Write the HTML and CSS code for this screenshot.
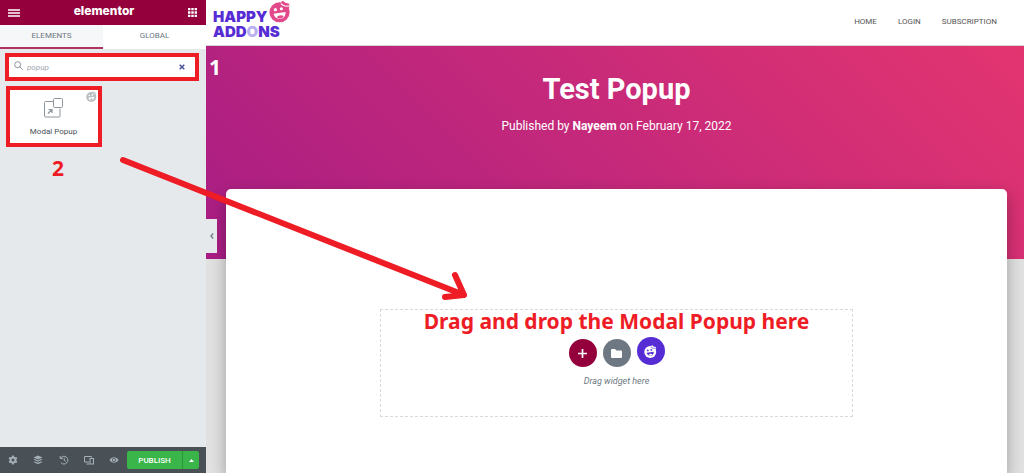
FILE: index.html
```html
<!DOCTYPE html>
<html lang="en">
<head>
    <meta charset="UTF-8">
    <title>Elementor | Test Popup</title>
    <link rel="stylesheet" href="styles.css">
</head>
<body>

<!-- face used by the logo, the widget badge and the add button -->
<svg class="defs" aria-hidden="true">
    <symbol id="happy" viewBox="0 0 24 24">
        <mask id="face">
            <rect width="24" height="24" fill="white"/>
            <path d="M5 14.500l13-2c.3 4.200-2 7-5.500 7.500-3.700.5-6.500-1.500-7.500-5.500z" fill="black"/>
            <circle cx="7" cy="10" r="1.700" fill="black"/>
            <circle cx="13.500" cy="9" r="1.700" fill="black"/>
            <path d="M13 3.500c2 2.500 5.500 3.500 10.500 2M16 0c1.500 2 4 2.800 7 2.300" fill="none" stroke="black" stroke-width="1.200"/>
        </mask>
        <g mask="url(#face)" fill="currentColor">
            <circle cx="11.500" cy="13" r="11"/>
            <path d="M13 1.500c2-1.500 3-1.500 4.500.700 1.500 1 3.500.8 4.500 1.300 1 2 0 5-1.500 6z"/>
        </g>
        <path d="M8.500 18.300c1.500-2.300 5.500-3 7.500-1-1.500 2.700-5.500 3.200-7.500 1z" fill="currentColor"/>
    </symbol>
</svg>

<aside class="panel">
    <header class="panel-header">
        <button class="icon-button" aria-label="Menu">
            <svg width="12" height="8" viewBox="0 0 12 8"><path d="M0 1h12M0 4h12M0 7h12" stroke="currentColor" stroke-width="1.700"/></svg>
        </button>
        <span class="panel-title">elementor</span>
        <button class="icon-button" aria-label="Widgets">
            <svg width="9" height="9" viewBox="0 0 9 9"><path d="M0 1.200h9M0 4.500h9M0 7.800h9" stroke="currentColor" stroke-width="2.300" stroke-dasharray="2.400 .9"/></svg>
        </button>
    </header>

    <nav class="tabs">
        <button class="tab active">ELEMENTS</button>
        <button class="tab">GLOBAL</button>
    </nav>

    <div class="panel-content">
        <div class="search marked">
            <svg width="9" height="12" viewBox="0 0 9 12" fill="none" stroke="#8b949b"><circle cx="3.700" cy="3.700" r="3"/><path d="M6 6l2.700 2.700"/></svg>
            <input type="text" class="search-input" value="popup" aria-label="Search widget">
            <button class="clear" aria-label="Clear">
                <svg width="6" height="6" viewBox="0 0 6 6"><path d="M.7.700l4.600 4.600M5.300.700L.7 5.300" stroke="currentColor" stroke-width="1.500"/></svg>
            </button>
        </div>
        <button class="widget marked">
            <svg class="badge" width="11" height="11"><use href="#happy"/></svg>
            <svg width="22" height="22" viewBox="0 0 22 22" fill="none" stroke="#8b969e">
                <path d="M10 4.500H2.500a1 1 0 0 0-1 1V19a1 1 0 0 0 1 1H16a1 1 0 0 0 1-1v-7.500"/>
                <rect x="10.500" y="1.500" width="9" height="9" rx="1"/>
                <path d="M5 16.500l4-4M5.500 12.500H9V16" stroke-width="1.200"/>
            </svg>
            <span>Modal Popup</span>
        </button>
        <span class="note step-two">2</span>
    </div>

    <footer class="panel-footer">
        <button class="tool" aria-label="Settings">
            <svg width="10" height="10" viewBox="0 0 10 10"><circle cx="5" cy="5" r="2.500" fill="none" stroke="currentColor" stroke-width="2"/><path d="M5 .5v1.500M5 8v1.500M1.100 2.700l1.300.8M7.600 6.500l1.300.8M1.100 7.300l1.300-.8M7.600 3.500l1.300-.8" stroke="currentColor" stroke-width="1.800"/></svg>
        </button>
        <button class="tool" aria-label="Navigator">
            <svg width="10" height="10" viewBox="0 0 10 10" fill="currentColor"><path d="M5 .5l4.500 2L5 4.500.500 2.500z"/><path d="M.5 4.600l1.500-.6 3 1.400L8 4l1.500.6L5 6.800z"/><path d="M.5 7l1.500-.6 3 1.400 3-1.400 1.500.6L5 9.200z"/></svg>
        </button>
        <button class="tool" aria-label="History">
            <svg width="10" height="10" viewBox="0 0 10 10" fill="none" stroke="currentColor"><path d="M1.700 3A3.900 3.900 0 1 1 2 7.700M1.200 1v2.500h2.500M5.200 2.800v2.500l1.600 1"/></svg>
        </button>
        <button class="tool" aria-label="Responsive mode">
            <svg width="10" height="10" viewBox="0 0 10 10" fill="none" stroke="currentColor"><path d="M7.500 2.500v-1h-7v5.500h4.500M2.500 9h3"/><rect x="6" y="3.500" width="3.500" height="5.500"/></svg>
        </button>
        <button class="tool" aria-label="Preview">
            <svg width="10" height="10" viewBox="0 0 10 10"><path d="M.5 5c2-3.700 7-3.700 9 0-2 3.700-7 3.700-9 0z" fill="currentColor"/><circle cx="5" cy="5" r="1.700" fill="none" stroke="#495157" stroke-width=".8"/></svg>
        </button>
        <button class="publish">PUBLISH</button>
        <button class="publish-more" aria-label="Save options">
            <svg width="5" height="3" viewBox="0 0 5 3"><path d="M0 3l2.500-3L5 3z" fill="currentColor"/></svg>
        </button>
    </footer>
</aside>

<main class="preview">
    <header class="site-header">
        <a href="#" class="logo">
            <span>HAPPY</span>
            <span>ADD<span class="logo-o">O</span>NS</span>
            <svg class="logo-face" width="22" height="23"><use href="#happy"/></svg>
        </a>
        <nav class="site-nav">
            <a href="#">HOME</a>
            <a href="#">LOGIN</a>
            <a href="#">SUBSCRIPTION</a>
        </nav>
    </header>

    <section class="hero">
        <h1>Test Popup</h1>
        <p>Published by <b>Nayeem</b> on February 17, 2022</p>
        <span class="note step-one">1</span>
    </section>

    <article class="page-card">
        <div class="drop-area">
            <strong class="note">Drag and drop the Modal Popup here</strong>
            <div class="add-buttons">
                <button class="round add" aria-label="Add new section">
                    <svg width="9" height="9" viewBox="0 0 9 9"><path d="M4.500 0v9M0 4.500h9" stroke="currentColor" stroke-width="1.700"/></svg>
                </button>
                <button class="round folder" aria-label="Add template">
                    <svg width="11" height="9" viewBox="0 0 11 9"><path d="M1 0h3l1.500 1.500H10a1 1 0 0 1 1 1V8a1 1 0 0 1-1 1H1a1 1 0 0 1-1-1V1a1 1 0 0 1 1-1z" fill="currentColor"/></svg>
                </button>
                <button class="round happy" aria-label="Happy Addons templates">
                    <svg width="13" height="13"><use href="#happy"/></svg>
                </button>
            </div>
            <p>Drag widget here</p>
        </div>
    </article>

    <button class="collapse" aria-label="Hide panel">
        <svg width="4" height="6" viewBox="0 0 4 6"><path d="M3.300.500L.9 3l2.400 2.500" fill="none" stroke="currentColor" stroke-width="1.200"/></svg>
    </button>
</main>

<!-- arrow from the widget to the drop area -->
<svg class="arrow" width="360" height="160" viewBox="115 150 360 160" aria-hidden="true">
    <path d="M123 160L464 295M455 275L464 295L445 297" fill="none" stroke="#ee1c24" stroke-width="6" stroke-linecap="round" stroke-linejoin="round"/>
</svg>

</body>
</html>
```

FILE: styles.css
```css
* {
    box-sizing: border-box;
}
body {
    margin: 0;
    height: 100vh;
    display: flex;
    overflow: hidden;
    font-family: Roboto, Arial, sans-serif;
}
button {
    display: flex;
    align-items: center;
    justify-content: center;
    padding: 0;
    border: none;
    background: none;
    font-family: inherit;
    cursor: pointer;
}
svg {
    display: block;
    flex-shrink: 0;
}
a {
    text-decoration: none;
}
.defs {
    position: absolute;
    width: 0;
    height: 0;
}

/* left panel */
.panel {
    width: 206px;
    flex-shrink: 0;
    display: flex;
    flex-direction: column;
    background-color: #e6e9ec;
}
.panel-header {
    height: 25px;
    padding: 0 9px 0 8px;
    display: flex;
    align-items: center;
    justify-content: space-between;
    background-color: #93003c;
    color: white;
}
.icon-button {
    color: white;
}
.panel-title {
    font-family: Inter, sans-serif;
    font-size: 12px;
    line-height: 20px;
    padding-bottom: 4px;
    font-weight: 800;
}
.tabs {
    display: flex;
    height: 24px;
}
.tab {
    flex: 1;
    padding-bottom: 2px;
    background-color: white;
    border-bottom: 2px solid white;
    color: #6d7882;
    font-size: 8px;
}
.tab.active {
    background-color: #f6f7f8;
    border-color: #b0305f;
}
.panel-content {
    flex: 1;
    display: flex;
    flex-direction: column;
    align-items: flex-start;
    padding: 4px 7px 0 5px;
}
.marked {
    border: 4px solid #ee1c24;
    background-color: white;
}
.search {
    width: 100%;
    height: 28px;
    padding: 0 10px 0 5px;
    display: flex;
    align-items: center;
    gap: 4px;
}
.search-input {
    flex: 1;
    min-width: 0;
    padding: 0;
    border: none;
    outline: none;
    color: #9da5ae;
    font-family: inherit;
    font-size: 8px;
    font-style: italic;
}
.clear {
    color: #4b5196;
}
.widget {
    position: relative;
    width: 96px;
    height: 61px;
    margin: 5px 0 0 1px;
    padding-right: 1px;
    flex-direction: column;
    gap: 8px;
    color: #495157;
    font-size: 8px;
}
.badge {
    position: absolute;
    top: 1px;
    right: 1px;
    color: #b8bdc1;
}
.note {
    color: #ee1c24;
    font-family: "Noto Sans", Tahoma, sans-serif;
    font-size: 21px;
    font-weight: bold;
    line-height: 22px;
    white-space: nowrap;
}
.step-two {
    margin: 10px 0 0 47px;
}
.panel-footer {
    height: 26px;
    display: flex;
    align-items: center;
    padding: 0 7px 0 0;
    background-color: #495157;
}
.tool {
    flex: 1;
    height: 26px;
    color: #a4afb7;
}
.publish,
.publish-more {
    height: 18px;
    background-color: #39b54a;
    color: white;
    font-size: 8px;
    font-weight: 500;
}
.publish {
    width: 55px;
    border-radius: 2px 0 0 2px;
}
.publish-more {
    width: 17px;
    border-left: 1px solid #2e953c;
    border-radius: 0 2px 2px 0;
}

/* page preview */
.preview {
    position: relative;
    flex: 1;
    min-width: 0;
    display: flex;
    flex-direction: column;
    background-color: #e1e1e1;
}
.site-header {
    flex-shrink: 0;
    height: 46px;
    padding: 0 27px 0 7px;
    display: flex;
    justify-content: space-between;
    align-items: center;
    background-color: white;
    border-bottom: 1px solid #d5d5d5;
}
.logo {
    position: relative;
    display: flex;
    flex-direction: column;
    padding-top: 3px;
    color: #562dd4;
    font-family: Inter, sans-serif;
    font-size: 15px;
    font-weight: 900;
    line-height: 15px;
}
.logo-o {
    color: #b9b0f0;
}
.logo-face {
    position: absolute;
    top: -6px;
    left: 56px;
    color: #e2498a;
}
.site-nav {
    display: flex;
    gap: 21px;
    padding-bottom: 2px;
}
.site-nav a {
    color: #555;
    font-size: 8px;
}
.hero {
    position: relative;
    flex-shrink: 0;
    height: 213px;
    padding: 25px 0 0 3px;
    background: linear-gradient(45deg, #a81d84, #e33570);
    color: white;
    text-align: center;
}
.hero h1 {
    margin: 0;
    font-size: 29px;
    line-height: 36px;
}
.hero p {
    margin: 11px 0 0;
    font-size: 12px;
    line-height: 16px;
}
.step-one {
    position: absolute;
    top: 10px;
    left: 3px;
    color: white;
}
.page-card {
    position: relative;
    flex: 1;
    margin: -70px 17px 0 20px;
    padding: 120px 154px 0;
    background-color: white;
    border-radius: 5px 5px 0 0;
    box-shadow: 0 6px 16px rgba(0,0,0,0.3);
}
.drop-area {
    height: 108px;
    display: flex;
    flex-direction: column;
    align-items: center;
    border: 1px dashed #d5dadf;
}
.add-buttons {
    display: flex;
    gap: 6px;
    align-items: flex-end;
    margin-top: 5px;
}
.round {
    width: 28px;
    height: 28px;
    border-radius: 50%;
    color: white;
}
.add {
    background-color: #93003c;
}
.folder {
    background-color: #6d7882;
}
.happy {
    margin-bottom: 2px;
    background-color: #562dd4;
}
.drop-area p {
    margin: 8px 0 0;
    color: #6d7882;
    font-size: 9px;
    font-style: italic;
    line-height: 12px;
}
.collapse {
    position: absolute;
    top: 219px;
    left: 0;
    width: 11px;
    height: 34px;
    background-color: #e6e9ec;
    color: #6d7882;
}
.arrow {
    position: absolute;
    top: 150px;
    left: 115px;
    pointer-events: none;
}
```
